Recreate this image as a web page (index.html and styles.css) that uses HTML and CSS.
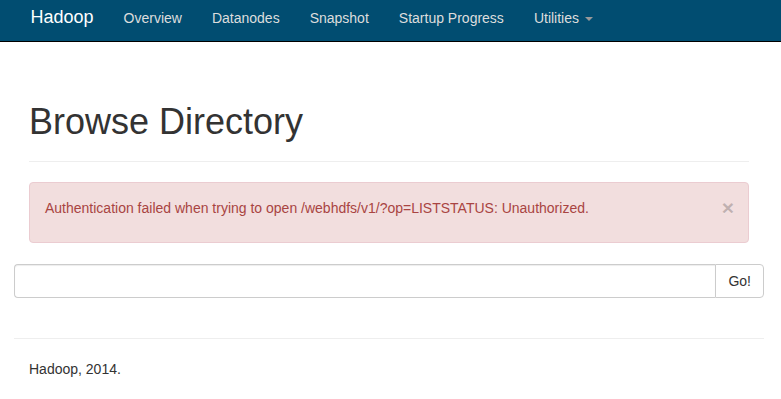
FILE: index.html
```html
<!DOCTYPE html>
<html lang="en">
<head>
    <meta charset="utf-8">
    <title>Browsing HDFS</title>
    <link rel="stylesheet" href="styles.css">
</head>
<body>
    <header class="navbar">
        <div class="container navbar-inner">
            <a class="navbar-brand" href="#">Hadoop</a>
            <ul class="nav">
                <li><a href="#">Overview</a></li>
                <li><a href="#">Datanodes</a></li>
                <li><a href="#">Snapshot</a></li>
                <li><a href="#">Startup Progress</a></li>
                <li><a href="#">Utilities <span class="caret"></span></a></li>
            </ul>
        </div>
    </header>
    <div class="container">
        <div class="page-header">
            <h1>Browse Directory</h1>
        </div>
        <div class="alert">
            <div class="alert-text">Authentication failed when trying to open /webhdfs/v1/?op=LISTSTATUS: Unauthorized.</div>
            <button class="close" type="button">&times;</button>
        </div>
        <div class="row">
            <form class="input-group" onsubmit="return false">
                <input type="text" class="form-control">
                <button class="btn" type="submit">Go!</button>
            </form>
        </div>
        <div class="row">
            <hr>
        </div>
        <footer>
            <p>Hadoop, 2014.</p>
        </footer>
    </div>
</body>
</html>
```

FILE: styles.css
```css
* { box-sizing: border-box; }
body {
    margin: 0;
    padding-right: 3px; /* page sits a little left of centre */
    font-family: "Liberation Sans", Arial, Helvetica, sans-serif;
    font-size: 14px;
    line-height: 20px;
    color: #333;
    background-color: #fff;
}
a { text-decoration: none; }
.container {
    width: 750px;
    margin: 0 auto;
    padding: 0 15px;
}
.row { margin: 0 -15px; }

/* top bar */
.navbar {
    height: 42px;
    margin-right: -3px;
    background-color: #014d71;
    border-bottom: 1px solid #000;
}
.navbar-inner {
    display: flex;
    align-items: flex-start;
}
.navbar-brand {
    margin-left: -15px;
    padding: 7px 15px 0;
    font-size: 18px;
    line-height: 20px;
    color: #fff;
}
.nav {
    display: flex;
    list-style: none;
    margin: 0;
    padding: 0;
}
.nav a {
    display: block;
    padding: 8px 15px 0;
    color: #ddd;
}
.caret {
    display: inline-block;
    width: 0;
    height: 0;
    margin-left: 2px;
    vertical-align: middle;
    border-top: 4px solid #999;
    border-left: 4px solid transparent;
    border-right: 4px solid transparent;
}

/* heading */
.page-header {
    margin: 60px 0 20px;
    padding-bottom: 9px;
    border-bottom: 1px solid #eee;
}
.page-header h1 {
    margin: 0 0 10px;
    font-size: 36px;
    font-weight: 500;
    line-height: 1.1;
}

/* error box */
.alert {
    display: flex;
    align-items: flex-start;
    margin-bottom: 21px;
    padding: 15px 35px 24px 15px;
    color: #a94442;
    background-color: #f2dede;
    border: 1px solid #ebccd1;
    border-radius: 4px;
}
.alert-text { flex: 1; }
.close {
    margin: -1px -21px 0 0;
    padding: 0;
    border: 0;
    background: none;
    font-family: inherit;
    font-size: 21px;
    font-weight: bold;
    line-height: 1;
    color: #000;
    opacity: .2;
    text-shadow: 0 1px 0 #fff;
    cursor: pointer;
}

/* path box */
.input-group {
    display: flex;
    margin: 0;
}
.form-control {
    flex: 1;
    height: 34px;
    padding: 6px 12px;
    font: inherit;
    color: #555;
    border: 1px solid #ccc;
    border-right: 0;
    border-radius: 4px 0 0 4px;
    box-shadow: inset 0 1px 1px rgba(0, 0, 0, .075);
}
.btn {
    height: 34px;
    padding: 6px 12px;
    font: inherit;
    color: #333;
    background-color: #fff;
    border: 1px solid #ccc;
    border-radius: 0 4px 4px 0;
}

hr {
    margin: 40px 0 20px;
    border: 0;
    border-top: 1px solid #eee;
}
footer p { margin: 0 0 10px; }
```
